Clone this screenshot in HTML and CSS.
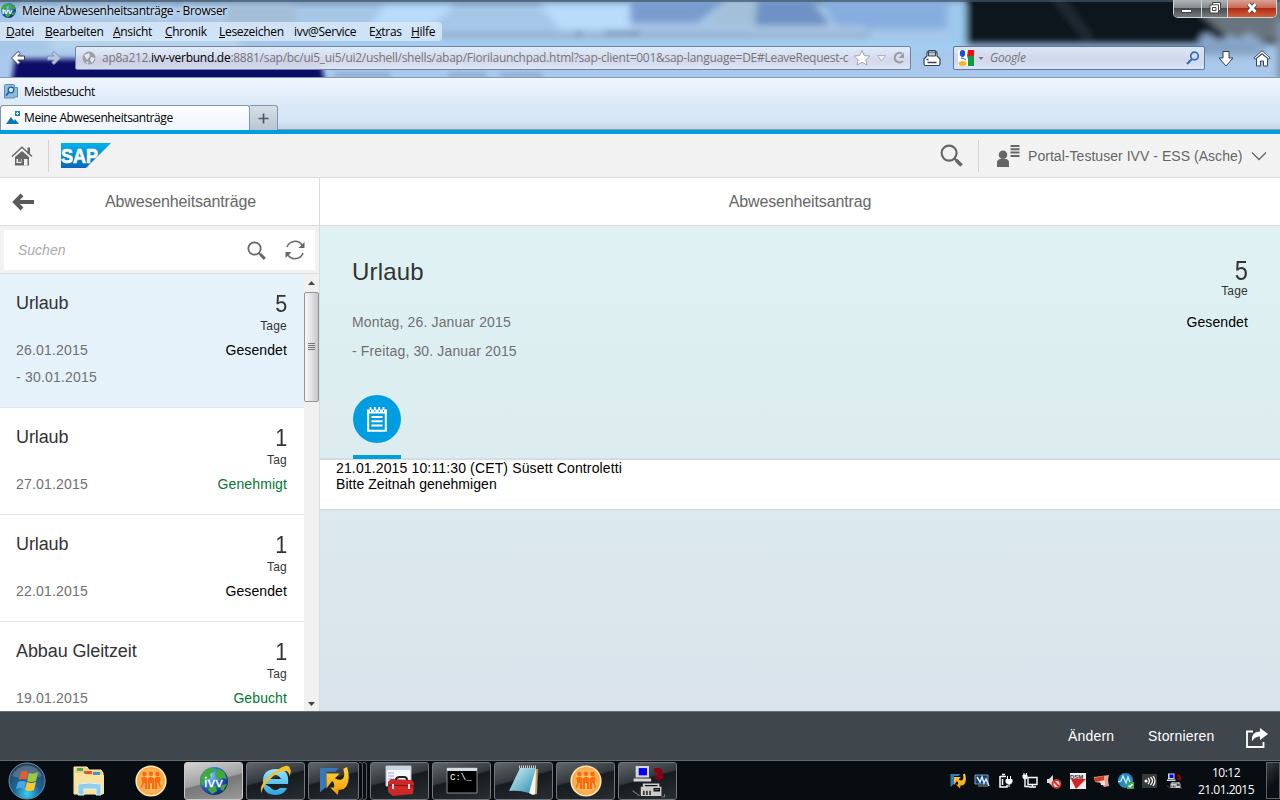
FILE: index.html
```html
<!DOCTYPE html>
<html lang="de">
<head>
<meta charset="utf-8">
<title>Meine Abwesenheitsanträge - Browser</title>
<link rel="stylesheet" href="styles.css">
</head>
<body>
<svg class="defs" width="0" height="0">
  <defs>
    <linearGradient id="sapG" x2="0" y2="1"><stop stop-color="#00b4ec"/><stop offset="1" stop-color="#0a66bb"/></linearGradient>
    <radialGradient id="orb" cx=".5" cy=".85" r=".8"><stop stop-color="#39d0f5"/><stop offset=".45" stop-color="#1c6597"/><stop offset="1" stop-color="#28435c"/></radialGradient>
    <radialGradient id="globe" cx=".35" cy=".3" r=".8"><stop stop-color="#8fd4ff"/><stop offset=".45" stop-color="#2a6fd2"/><stop offset="1" stop-color="#0b1f66"/></radialGradient>
    <radialGradient id="orange"><stop stop-color="#ffd08a"/><stop offset="1" stop-color="#f8a640"/></radialGradient>
    <linearGradient id="ie" x2="0" y2="1"><stop stop-color="#9be4fb"/><stop offset="1" stop-color="#2aa5e0"/></linearGradient>
    <linearGradient id="gold" x2="0" y2="1"><stop stop-color="#ffd93b"/><stop offset="1" stop-color="#f29a05"/></linearGradient>
    <linearGradient id="note" x2="1" y2="1"><stop stop-color="#d6f3fa"/><stop offset="1" stop-color="#2a8fae"/></linearGradient>
    <symbol id="i-globe" viewBox="0 0 32 32">
      <circle cx="16" cy="16" r="14" fill="url(#globe)"/>
      <path d="M4 9Q8 2 15 3l2 3-5 3 1 4-6 3-2 6-3-5zM20 3l6 4 3 7-5-1-4 3-3-6zM12 19l6 2 1 5-5 3-4-4zM24 20l5-1-4 7-3-2z" fill="#41a83c"/>
    </symbol>
    <symbol id="i-people" viewBox="0 0 32 32">
      <circle cx="16" cy="16" r="14.800" fill="url(#orange)" stroke="#ffe6b8" stroke-width="1.600"/>
      <g fill="#fb6a0c"><circle cx="9.500" cy="9" r="2.200"/><circle cx="16" cy="8.800" r="2.200"/><circle cx="22.500" cy="9" r="2.200"/><path d="M6 13q3-2 6.500 0v11H10v-6H9l-2 5-1.500-1q3-4 .5-9zM13 13q3-2 6 0v11h-2v-6h-2v6h-2zM26 13q-3-2-6.500 0v11H22v-6h1l2 5 1.500-1q-3-4-.5-9z"/></g>
    </symbol>
    <symbol id="i-sap-arrow" viewBox="0 0 32 32">
      <path d="M1 2h20l-4 4H8v16l-7 6z" fill="#3a76b8"/>
      <path d="M8 8h14l-5 5q9 5 10-4l-1-6 4-2q4 14-1 21-3 4-8 3l-1 6-8-8h4q1-5-2-7l-6 8z" fill="url(#gold)"/>
    </symbol>
    <symbol id="i-net" viewBox="0 0 32 32">
      <path d="M4 1h13v11H4zM2 13h17v3H2z" fill="#d7d7d7"/><path d="M7 3h8v7H7z" fill="#0000f5"/>
      <path d="M22 3h4q4 0 4 5v3h2l-5 5-6-5h4V8q0-1-3-1z" fill="#8b0010"/>
      <path d="M11 18h16v3h2v9H9v-9h2z" fill="#ccc"/><path d="M12 25v4M15 25v4M18 25v4M22 23h5v2h-5zM13 20h12" fill="none" stroke="#111" stroke-width="1.300"/><path d="M1 25l7 5M29 31h3v-3" fill="none" stroke="#777"/>
    </symbol>
    <symbol id="i-mag" viewBox="0 0 24 24"><circle cx="9.500" cy="9.500" r="7.800" fill="none" stroke="#666" stroke-width="2.200"/><path d="M15 15l3 3" stroke="#666" stroke-width="2.500"/><path d="M17 17l5.500 5.500" stroke="#666" stroke-width="3.800"/></symbol>
  </defs>
</svg>
<div class="screen">
  <header class="chrome">
    <svg class="glass" width="1280" height="78" viewBox="0 0 1280 78">
      <defs><filter id="b" x="-10%" y="-30%" width="120%" height="160%"><feGaussianBlur stdDeviation="3.500"/></filter><filter id="nb" x="-10%" y="-60%" width="120%" height="220%"><feGaussianBlur stdDeviation="2.500"/></filter><linearGradient id="base" x2="0" y2="1"><stop stop-color="#7898b8"/><stop offset=".12" stop-color="#a6c6e6"/><stop offset="1" stop-color="#a8c9ec"/></linearGradient></defs>
      <rect width="1280" height="78" fill="url(#base)"/>
      <g filter="url(#b)">
        <path d="M225 6h70v18h-70z" fill="#a3bdd6"/>
        <path d="M385 6h70l-25 20h-60zM540 5h90v25h-70z" fill="#b9dcfb"/>
        <path d="M630 0h95l-28 23h-67z" fill="#7a9bce"/>
        <path d="M725 0h32v26h-50z" fill="#a4bfda"/>
        <path d="M757 0h55l18 26h-75z" fill="#6f91c5"/>
        <path d="M822 2h125v27H838z" fill="#86addf"/>
        <path d="M948 4h18v45h-18z" fill="#9cc9ed"/>
        <path d="M440 35h430" stroke="#8eabc9" stroke-width="5"/>
        <path d="M750 29h115" stroke="#b4cce6" stroke-width="4"/>
        <path d="M330 46h630" stroke="#a0cff4" stroke-width="8"/>
        <path d="M50 44h190" stroke="#b9d6ec" stroke-width="10"/>
        <path d="M966-15H1300V44H966z" fill="#0b141c"/>
        <path d="M1175-10h120v50h-65z" fill="#69757e"/>
        <path d="M1055-5l35 45" stroke="#202a34" stroke-width="10"/>
        <path d="M1150 48l48-2q4-18 14-10 8 8 18-2 8 10 18-2l18 12v12H1150z" fill="#8ca8ca"/>
        <path d="M1277 20h12v60h-12z" fill="#7e93a6"/>
        <path d="M966 48h290" stroke="#7598bb" stroke-width="4"/>
      </g>
      <path d="M850 61h402" stroke="#2b438f" stroke-width="8" filter="url(#nb)"/>
      <path d="M15 59h305l6 28H11z" fill="#0b1168" filter="url(#nb)"/>
      <g fill="#6d88a8" opacity=".55" filter="url(#nb)"><path d="M335 73h55v4h-55zM448 73h38v4h-38zM500 73h42v4h-42zM575 32h8v4h-8zM605 31h35v4h-35z"/></g>
      <path d="M0 0h1280v2H0z" fill="#40566b" opacity=".7"/>
    </svg>
    <div class="titlebar">
      <svg class="fav" width="17" height="17"><use href="#i-globe" width="17" height="17"/><text x="2" y="12" class="favtxt">ivv</text></svg>
      <span class="title">Meine Abwesenheitsanträge - Browser</span>
      <div class="winbtns">
        <span class="wb"><svg width="12" height="6"><path d="M.5 1.500h10v3h-10z" fill="#fff" stroke="#444"/></svg></span>
        <span class="wb mid"><svg width="12" height="12"><path d="M3.500.5h8v8h-2v2.500h-8.500v-8h2.500z" fill="#fff" stroke="#444"/><path d="M3.500 5.500h3.500v3H3.500zM4 2.800h5.500V8" fill="none" stroke="#444"/></svg></span>
        <span class="wb close"><svg width="14" height="12"><path d="M3.500 2l7 8M10.500 2l-7 8" stroke="#444" stroke-width="4.500"/><path d="M3.500 2l7 8M10.500 2l-7 8" stroke="#fff" stroke-width="2.800"/></svg></span>
      </div>
    </div>
    <nav class="menu">
      <span><u>D</u>atei</span><span><u>B</u>earbeiten</span><span><u>A</u>nsicht</span><span><u>C</u>hronik</span><span><u>L</u>esezeichen</span><span>ivv@Service</span><span>E<u>x</u>tras</span><span><u>H</u>ilfe</span>
    </nav>
    <div class="navbar">
      <svg class="back" width="16" height="16"><path d="M8 1.500L1.500 8 8 14.500l2.200-2L7.800 10h6.700V6H7.800l2.400-2.500z" fill="#fff" stroke="#33405c"/></svg>
      <svg class="fwd" width="16" height="16"><path d="M8 1.500L14.500 8 8 14.500l-2.200-2L8.200 10H1.500V6h6.700L5.800 3.500z" fill="#b9c8de" stroke="#8496b8"/></svg>
      <div class="url">
        <svg width="14" height="14"><circle cx="7" cy="7" r="6.500" fill="#9b9ea5"/><path d="M2 4l5-2 1 3-3 4zM9 6l4 1-3 5-2-3zM4 10l3 2-2 1z" fill="#e3e5ed"/></svg>
        <span class="addr">ap8a212.<b>ivv-verbund.de</b>:8881/sap/bc/ui5_ui5/ui2/ushell/shells/abap/Fiorilaunchpad.html?sap-client=001&amp;sap-language=DE#LeaveRequest-c</span>
        <svg class="urlicons" width="54" height="18"><path d="M8 1.500l2.300 5 5.500.5-4 3.700 1.200 5.300L8 13.300 3 16l1.200-5.300L0 7l5.600-.5z" fill="#fff" stroke="#a0a4ac"/><path d="M23.500 6.500h8L27.500 12z" fill="#eef0f6" stroke="#adb1bb"/><path d="M48 4.500A4.800 4.800 0 1 0 49 12" fill="none" stroke="#999da6" stroke-width="2.200"/><path d="M44.500 9H50V3.500z" fill="#999da6"/></svg>
      </div>
      <svg class="print" width="18" height="18"><path d="M4 7V3.500l2-2h6l2 2V7l3 3v5q0 1.500-1.500 1.500h-13Q1 16.500 1 15v-5z" fill="#fff" stroke="#34425a" stroke-width="1.200"/><path d="M5.500 3h7v4h-7z" fill="#b9c6d8" stroke="#34425a"/><path d="M4.500 13.500h9M3.500 10.500h2" stroke="#34425a" stroke-width="1.500"/></svg>
      <div class="gsearch">
        <svg width="27" height="16"><path d="M0 0h16v16H0z" fill="#fff"/><path d="M9 0h7v6H9z" fill="#f20d12"/><path d="M9 6h7v10H9z" fill="#129946"/><path d="M7 0h3L9 6l1 3v7H8z" fill="#fff"/><ellipse cx="4.500" cy="3.500" rx="2.700" ry="3.400" fill="#1c52cf"/><path d="M3 8q3 0 5 2" stroke="#1c52cf" fill="none"/><ellipse cx="4.500" cy="13.500" rx="4" ry="2.500" fill="#f7b51c"/><path d="M20.500 7h5L23 10z" fill="#777"/></svg>
        <i>Google</i>
        <svg class="gmag" width="14" height="14"><circle cx="8.500" cy="5" r="3.800" fill="none" stroke="#3470ae" stroke-width="1.700"/><path d="M6 8l-5 5" stroke="#3470ae" stroke-width="2.200"/></svg>
      </div>
      <svg class="dl" width="16" height="17"><path d="M5 1.500h6v6.500h4L8 16 1 8h4z" fill="#fff" stroke="#34425a"/></svg>
      <svg class="hm" width="18" height="17"><path d="M3.500 8.500v7.500h4v-5h3v5h4V8.500L9 4z" fill="#fff" stroke="#34425a"/><path d="M9 .8L.8 8l1.200 1.200L9 3.500l7 5.700L17.200 8 14.500 5.500z" fill="#fff" stroke="#34425a" stroke-width=".9"/></svg>
    </div>
  </header>
  <div class="tools">
    <div class="bookmarks"><svg width="15" height="16"><path d="M.5 1.500q0-1 1-1h8q1 0 1 1v2h3v9.500h-3v1H.5z" fill="#8dbbe0" stroke="#5b8dba"/><circle cx="7" cy="6" r="2.800" fill="#d6eafa" stroke="#255f93" stroke-width="1.300"/><path d="M5 8L2 11.500" stroke="#255f93" stroke-width="1.800"/></svg><span>Meistbesucht</span></div>
    <div class="tabs">
      <div class="tab"><svg width="14" height="14"><path d="M0 0h14v14H0z" fill="#fff"/><path d="M0 13l5-7 3 4 1-2 4 5z" fill="#0a77b5"/><path d="M9 0h5v5H9z" fill="#1184c6"/><path d="M11.500 1v3M10 2.500h3" stroke="#fff"/></svg><span>Meine Abwesenheitsanträge</span></div>
      <div class="plus"><svg width="11" height="11"><path d="M5.500.5v10M.5 5.500h10" stroke="#4b5967" stroke-width="1.700"/></svg></div>
    </div>
  </div>
  <div class="shell">
    <svg class="home" width="22" height="20"><path d="M4 11L11 5l7 6v8.500H4z" fill="#666"/><path d="M1 10.500L11 1.200l10 9.300" fill="none" stroke="#666" stroke-width="1.400"/><path d="M16.500 1.500H19V8h-2.500z" fill="#666"/><path d="M5.500 13h5v4h-5zM13 13h3.500v6.500H13z" fill="#f2f2f2"/><path d="M7 13h3v3H7z" fill="#777"/></svg>
    <span class="sep"></span>
    <svg class="logo" width="51" height="26"><path d="M0 0h50L25 25H0z" fill="url(#sapG)"/><text x="0" y="20" class="saptxt" textLength="37" lengthAdjust="spacingAndGlyphs">SAP</text></svg>
    <span class="grow"></span>
    <svg class="smag" width="23" height="23"><use href="#i-mag"/></svg>
    <span class="sep"></span>
    <svg class="user" width="24" height="23"><circle cx="7" cy="10.800" r="4.300" fill="#666"/><path d="M1 23v-4.500q0-3 3-3.500h6q3 .5 3 3.500v4.500z" fill="#666"/><path d="M14.500 2h9M14.500 5.300h9M14.500 8.600h9M14.500 11.900h9" stroke="#666" stroke-width="2"/></svg>
    <span class="uname">Portal-Testuser IVV - ESS (Asche)</span>
    <svg class="chev" width="16" height="10"><path d="M1 1.500l7 7 7-7" fill="none" stroke="#666" stroke-width="1.300"/></svg>
  </div>
  <main class="main">
    <aside class="master">
      <div class="phead"><svg class="arrow" width="23" height="18"><path d="M10 1.800L3 9l7 7M3 9h19" fill="none" stroke="#5a5a5a" stroke-width="4"/></svg><span>Abwesenheitsanträge</span></div>
      <div class="searchwrap"><div class="searchbox"><i>Suchen</i><svg class="m1" width="19" height="19"><use href="#i-mag"/></svg><svg class="m2" width="20" height="20"><path d="M2 7A8.500 8.500 0 0 1 17 5M18 13A8.500 8.500 0 0 1 3 15" fill="none" stroke="#666" stroke-width="1.500"/><path d="M19.500 2v6h-6zM.5 18v-6h6z" fill="#666"/></svg></div></div>
      <div class="listarea">
        <div class="list">
          <article class="item sel"><div class="r1"><h3>Urlaub</h3><span class="num">5</span></div><div class="unit">Tage</div><div class="r2"><span>26.01.2015<br>- 30.01.2015</span><b>Gesendet</b></div></article>
          <article class="item"><div class="r1"><h3>Urlaub</h3><span class="num">1</span></div><div class="unit">Tag</div><div class="r2"><span>27.01.2015</span><b class="ok">Genehmigt</b></div></article>
          <article class="item"><div class="r1"><h3>Urlaub</h3><span class="num">1</span></div><div class="unit">Tag</div><div class="r2"><span>22.01.2015</span><b>Gesendet</b></div></article>
          <article class="item"><div class="r1"><h3>Abbau Gleitzeit</h3><span class="num">1</span></div><div class="unit">Tag</div><div class="r2"><span>19.01.2015</span><b class="ok">Gebucht</b></div></article>
        </div>
        <div class="scroll">
          <svg class="up" width="7" height="4"><path d="M0 4h7L3.500 0z" fill="#444"/></svg>
          <div class="thumb"><svg width="7" height="9"><path d="M0 .5h7M0 2.500h7M0 4.500h7M0 6.500h7" stroke="#777"/></svg></div>
          <span class="grow"></span>
          <svg class="down" width="7" height="4"><path d="M0 0h7L3.500 4z" fill="#444"/></svg>
        </div>
      </div>
    </aside>
    <section class="detail">
      <div class="phead center"><span>Abwesenheitsantrag</span></div>
      <div class="hero">
        <div class="hrow"><h2>Urlaub</h2><span class="num big">5</span></div>
        <div class="hunit">Tage</div>
        <div class="hdates"><span>Montag, 26. Januar 2015<br>- Freitag, 30. Januar 2015</span><b>Gesendet</b></div>
        <div class="icontab"><span class="disc"><svg width="20" height="25"><path d="M1.200 4h17.600v19.800H1.200z" fill="none" stroke="#fff" stroke-width="2"/><path d="M0 2.500h20v4H0z" fill="#fff"/><path d="M3.500 0v3M7.800 0v3M12.200 0v3M16.500 0v3" stroke="#fff" stroke-width="1.800"/><path d="M3.500 3v2M7.800 3v2M12.200 3v2M16.500 3v2" stroke="#009de0" stroke-width="1"/><path d="M4.500 10h11M4.500 14.300h11M4.500 18.600h11" stroke="#fff" stroke-width="2"/></svg></span></div>
      </div>
      <div class="notes"><span class="stamp">21.01.2015 10:11:30 (CET) Süsett Controletti</span><br>Bitte Zeitnah genehmigen</div>
    </section>
  </main>
  <footer class="actions"><span class="a1">Ändern</span><span class="a2">Stornieren</span><svg width="22" height="20"><path d="M7 3.500H1v15.500h16.500V14" fill="none" stroke="#fff" stroke-width="1.800"/><path d="M14 0l8 6-8 6V8.500q-5.500 0-8 5Q4.500 4 14 3.500z" fill="#fff"/></svg></footer>
  <div class="taskbar">
    <div class="start"><svg width="38" height="38" viewBox="0 0 38 38"><circle cx="19" cy="19" r="18" fill="url(#orb)" stroke="#6d8ca6"/><path d="M4 14A16 16 0 0 1 34 14Q19 19 4 14z" fill="#fff" opacity=".2"/><path d="M13 10q3-2 7 0l-2 8q-4-2-7 0z" fill="#ee5b2a"/><path d="M21 11q4 2 9-1l-2 9q-5 2-9 0z" fill="#a0c93b"/><path d="M10 20q4-2 8 0l-2 7q-4-2-8 0z" fill="#4aa7e8"/><path d="M19 20q4 2 9 0l-2 8q-5 2-9 0z" fill="#fdc72e"/></svg></div>
    <div class="pin"><svg width="34" height="32"><path d="M2 2h13l2 3h12l2 3v21H2z" fill="#edd37f" stroke="#fff0b5"/><path d="M5 3h6v3H5z" fill="#51a757"/><path d="M12 6h8v3h-8z" fill="#d9583e"/><path d="M21 7h7v3h-7z" fill="#4794c4"/><path d="M3 8h9l2 2h18v19H3z" fill="#f7e39d"/><path d="M6 30V19q11-2 23 0v11h-5v-6H12v6z" fill="#90cee9" stroke="#d7f2fc"/></svg></div>
    <div class="pin"><svg width="32" height="32"><use href="#i-people"/></svg></div>
    <div class="task active"><svg width="32" height="32"><use href="#i-globe"/><text x="6" y="22" class="ivvtxt">ivv</text></svg></div>
    <div class="task"><svg width="34" height="32"><path d="M6 19h23q2-15-12-15T4 18q0 12 13 12 8 0 11-7h-7q-6 5-10-1zM11 14q6-8 11 0z" fill="url(#ie)" fill-rule="evenodd"/><path d="M3 29Q-2 20 14 8T31 4q2 2-1 8 1-5-3-6-8-1-17 9T3 29z" fill="#f7bf26"/></svg></div>
    <div class="task narrow"><svg width="32" height="30"><use href="#i-sap-arrow"/></svg></div><div class="stack"></div><div class="stack s2"></div>
    <div class="task t6"><svg width="32" height="32"><path d="M2 1h25v20H2z" fill="#f6f9fc" stroke="#aebbc8"/><path d="M2 1h25v4H2z" fill="#c9d6e2"/><path d="M4 8h6M4 11h6M4 14h6M4 17h6" stroke="#94a8bb"/><path d="M4 17l3-3 21 1 2 3-1 11-20 2-5-4z" fill="#cc2828"/><path d="M4 20l26 1" stroke="#7c1212"/><path d="M12 15q0-3 4-3h4q3 0 3 3" fill="none" stroke="#222" stroke-width="2"/><path d="M9 19v5M25 19v5" stroke="#ddd" stroke-width="2"/></svg></div>
    <div class="task"><svg width="32" height="28"><path d="M1 1h30v25H1z" fill="#000" stroke="#8c8c8c"/><path d="M1 1h30v3H1z" fill="#d7dce0"/><text x="4" y="13" class="cmd">C:\_</text></svg></div>
    <div class="task"><svg width="32" height="32"><path d="M18 4h12l-1 25-5 1z" fill="#c9a45b"/><path d="M12 3h16l-7 25q-10-3-20-2z" fill="url(#note)"/><path d="M28 3l-1 26q-2 2-6-1z" fill="#f4fafc"/><path d="M11 2h17" stroke="#ccc" stroke-width="3" stroke-dasharray="1 1"/></svg></div>
    <div class="task"><svg width="32" height="32"><use href="#i-people"/></svg></div>
    <div class="task"><svg width="34" height="33"><use href="#i-net" width="34" height="33"/></svg></div>
    <span class="grow"></span>
    <div class="tray">
      <svg width="16" height="16"><use href="#i-sap-arrow"/></svg>
      <svg width="16" height="16"><path d="M1 2h13v9H1zM4 13h10" fill="#193e69" stroke="#819bb6"/><path d="M3 4l3 5 2-5 2 6 2-4 3 7" fill="none" stroke="#d7eaff" stroke-width="1.500"/></svg>
      <svg width="16" height="16"><path d="M2 3.500h6M2 3v11h7v-2M4 1.500h3M4.500 6v6" fill="none" stroke="#fff" stroke-width="1.500"/><path d="M8 6.500h6v3q-3 3.500-6 0zM9.500 6V3M12.500 6V3M11 12v2" fill="#fff" stroke="#fff"/></svg>
      <svg width="16" height="16"><path d="M6 4.500h9v7H6zM7 14h7M10.500 12v2M3 6v7.500H7" fill="none" stroke="#fff" stroke-width="1.400"/><path d="M1 2h4v3q-2 2-4 0zM2 0v3M4.500 0v3" fill="#fff" stroke="#fff"/></svg>
      <svg width="16" height="16"><path d="M1 6h2l4-4v12L3 10H1z" fill="#ddd"/><circle cx="10.500" cy="11" r="4" fill="#f7dcd8" stroke="#d82e2e" stroke-width="1.800"/><path d="M8 8.500l5 5" stroke="#d82e2e" stroke-width="1.800"/></svg>
      <svg width="16" height="16"><path d="M0 0h16v16H0z" fill="#eee"/><text x="0" y="5.500" class="dsm">DSM</text><path d="M1 6h15l-10 10z" fill="#d91f26"/></svg>
      <svg width="16" height="16"><path d="M0 4l15-2-1 5 1 6-5 1-3-4-6-1z" fill="#e6a393"/><path d="M0 5l10-2v4l-9 2z" fill="#c6402d"/><path d="M6 8h5v4H7z" fill="#f5dcd5"/></svg>
      <svg width="16" height="16"><circle cx="7.500" cy="7.500" r="7.500" fill="#278ac0"/><path d="M0 9l3-1 2-5 3 7 2-6 2 5" fill="none" stroke="#cfefff" stroke-width="1.300"/><path d="M9 9h7v7H9z" fill="#35a94c"/><path d="M10.500 12.500l1.500 1.500 2.500-3" stroke="#fff" fill="none" stroke-width="1.500"/></svg>
      <svg width="16" height="16"><path d="M0 1h15v14H0z" fill="#393939"/><circle cx="4" cy="8" r="1.500" fill="#fff"/><path d="M6 5q3 3 0 6M8.500 4q4 4 0 8M11 3q4 5 0 10" stroke="#fff" fill="none" stroke-width="1.200"/></svg>
      <svg width="16" height="16"><use href="#i-net"/></svg>
    </div>
    <div class="clock">10:12<br>21.01.2015</div>
    <div class="peek"></div>
  </div>
</div>
</body>
</html>
```

FILE: styles.css
```css
* { box-sizing: border-box; }
body { margin: 0; width: 1280px; height: 800px; overflow: hidden; font-family: "Liberation Sans", Arial, sans-serif; }
svg { display: block; flex: none; }
b { font-weight: normal; color: #000; }
.defs { position: absolute; }
.grow { flex: 1; }
.screen { display: flex; flex-direction: column; width: 1280px; height: 800px; }

/* Browser window frame */
.chrome { position: relative; isolation: isolate; height: 78px; flex: none; border-bottom: 1px solid #8499b3; font: 12px/16px "Open Sans", "Noto Sans", sans-serif; letter-spacing: -.35px; overflow: hidden; white-space: nowrap; }
.glass { position: absolute; left: 0; top: 0; z-index: -1; }
.titlebar { display: flex; height: 22px; align-items: flex-start; }
.fav { margin-top: 2px; }
.favtxt { font: bold 8px "Liberation Sans", sans-serif; fill: #fff; }
.title { margin: 3px 0 0 5px; flex: 1; letter-spacing: -.3px; text-shadow: 0 0 8px #fff, 0 0 5px #dcebfa; }
.winbtns { display: flex; width: 104px; height: 18px; margin-right: 3px; border: 1px solid #d1d4d6; border-top: 0; border-radius: 0 0 5px 5px; overflow: hidden; }
.wb { width: 28px; display: flex; align-items: center; justify-content: center; padding-bottom: 2px; background: linear-gradient(#b0b4b7, #83888b 48%, #474c50 50%, #777c80); border-right: 1px solid #d1d4d6; }
.wb:first-child { padding: 4px 0 0; }
.wb.mid { width: 27px; }
.wb.close { width: 48px; border: 0; background: linear-gradient(#d9a296, #c56753 48%, #b22c12 50%, #d0603f); }
.menu { display: grid; grid-template-columns: 39px 68px 52px 54px 75px 75px 42px 31px; width: 442px; height: 19px; padding-left: 6px; line-height: 19px; letter-spacing: -.3px; background: rgba(225,237,249,.72); border-radius: 0 4px 4px 0; }
.navbar { display: flex; align-items: center; height: 34px; }
.back { margin-left: 10px; }
.fwd { margin-left: 20px; }
.url { display: flex; align-items: center; height: 24px; width: 836px; margin-left: 13px; padding-left: 6px; border: 1px solid #7083a0; border-radius: 2px; background: linear-gradient(rgba(236,244,253,.8), rgba(214,217,235,.94) 60%, rgba(225,232,246,.94)); }
.addr { margin-left: 6px; color: #777; width: 752px; letter-spacing: -.275px; }
.print { margin-left: 12px; }
.gsearch { display: flex; align-items: center; height: 24px; width: 252px; margin-left: 12px; padding-left: 4px; border: 1px solid #6177a0; border-radius: 2px; background: linear-gradient(#dbe7f4, #d0d6eb 60%, #dae6f8); color: #777; }
.gsearch i { flex: 1; margin-left: 5px; letter-spacing: -.2px; }
.gmag { margin-right: 4px; }
.dl { margin-left: 13px; }
.hm { margin-left: 19px; }
.tools { height: 52px; flex: none; background: linear-gradient(#f0f6fe, #dae8f7 55%, #d5e5f5 85%, #c4d5e5); font: 12px/16px "Open Sans", "Noto Sans", sans-serif; letter-spacing: -.35px; border-bottom: 1px solid #8b9cab; }
.bookmarks { display: flex; height: 27px; align-items: center; padding-left: 4px; gap: 5px; }
.tabs { display: flex; height: 25px; }
.tab { display: flex; align-items: center; gap: 4px; width: 250px; padding-left: 5px; letter-spacing: -.4px; background: linear-gradient(#fff, #edf4fb); border: 1px solid #8794a2; border-bottom: 0; border-radius: 3px 3px 0 0; }
.plus { display: flex; align-items: center; justify-content: center; width: 28px; background: linear-gradient(#d6dfe8, #b9c5d0); border: 1px solid #8794a2; border-left: 0; border-bottom: 0; border-radius: 0 3px 0 0; }

/* Launchpad shell */
.shell { display: flex; align-items: center; height: 48px; flex: none; border-top: 4px solid #009de0; border-bottom: 1px solid #dcdcdc; background: #f2f2f2; color: #666; font-size: 14px; }
.home { margin-left: 11px; margin-right: 15px; }
.sep { width: 1px; height: 32px; background: #d3d3d3; }
.logo { margin-left: 12px; }
.saptxt { font: bold 20px "Liberation Sans", sans-serif; fill: #fff; stroke: #fff; stroke-width: .7px; }
.smag { margin-right: 15px; }
.user { margin: 0 8px 0 17px; }
.uname { width: 215px; letter-spacing: .04px; white-space: nowrap; }
.chev { margin: 0 13px 0 8px; }
.main { display: flex; height: 533px; flex: none; }
.master { width: 320px; border-right: 1px solid #dcdcdc; display: flex; flex-direction: column; background: #f2f2f2; }
.phead { display: flex; align-items: center; height: 48px; flex: none; padding-top: 1px; background: #fff; border-bottom: 1px solid #dcdcdc; color: #666; font-size: 16px; letter-spacing: -.15px; }
.arrow { margin: 0 70px 0 12px; }
.phead.center { justify-content: center; }
.searchwrap { height: 48px; flex: none; padding: 4px; border-bottom: 1px solid #dcdcdc; }
.searchbox { display: flex; align-items: center; height: 40px; width: 311px; background: #fff; padding-left: 14px; color: #aaa; font-size: 14px; }
.searchbox i { width: 229px; }
.m1 { margin-right: 19px; }
.m1 use, .smag use { width: 100%; height: 100%; }
.listarea { display: flex; flex: 1; min-height: 0; overflow: hidden; }
.list { width: 304px; overflow: hidden; background: #fff; }
.item { height: 107px; padding: 16px 17px 0 16px; border-bottom: 1px solid #e5e5e5; font-size: 14px; }
.item.sel { height: 134px; background: #e6f2fa; }
.r1 { display: flex; justify-content: space-between; height: 28px; }
h3 { margin: 3px 0 0; font-size: 18px; line-height: 20px; font-weight: normal; color: #333; letter-spacing: -.1px; }
.num { font-size: 24px; line-height: 28px; color: #333; transform: scaleX(.9); transform-origin: right; }
.unit { height: 16px; font-size: 12px; line-height: 16px; text-align: right; color: #333; letter-spacing: .2px; }
.r2 { display: flex; justify-content: space-between; margin-top: 3px; line-height: 27px; color: #707070; letter-spacing: .2px; }
.r2 b { letter-spacing: .1px; }
.r2 .ok { color: #007833; }
.scroll { width: 15px; display: flex; flex-direction: column; align-items: center; background: #f0f0f0; }
.up { margin-top: 7px; }
.thumb { display: flex; align-items: center; justify-content: center; width: 15px; height: 110px; margin-top: 7px; border: 1px solid #959595; border-radius: 2px; background: linear-gradient(90deg, #f6f6f6, #e1e1e4 50%, #c5c6cc); }
.down { margin-bottom: 5px; }
.detail { flex: 1; background: linear-gradient(#ddf1f3, #dae3eb); display: flex; flex-direction: column; }
.hero { height: 234px; padding: 29px 32px 0; border-bottom: 2px solid #d0dfe2; font-size: 14px; background: linear-gradient(#dff1f3, #dcecef); }
.hrow { display: flex; justify-content: space-between; height: 28px; }
h2 { margin: 3px 0 0; font-size: 24px; line-height: 28px; font-weight: normal; color: #333; letter-spacing: .2px; }
.big { font-size: 27px; line-height: 32px; transform: scaleX(.88); }
.hunit { font-size: 12px; line-height: 16px; text-align: right; color: #333; letter-spacing: .2px; }
.hdates { display: flex; justify-content: space-between; line-height: 29px; margin-top: 9px; color: #707070; letter-spacing: .14px; }
.hdates b { letter-spacing: .1px; }
.icontab { width: 48px; height: 64px; margin: 29px 0 0 1px; border-bottom: 4px solid #009de0; }
.disc { display: flex; align-items: center; justify-content: center; width: 48px; height: 48px; border-radius: 50%; background: #009de0; }
.notes { height: 50px; background: #fff; border-bottom: 1px solid #d4dce1; padding-left: 16px; font-size: 14px; line-height: 16px; letter-spacing: .05px; }
.stamp { letter-spacing: .14px; }
.actions { display: flex; align-items: center; height: 49px; flex: none; background: #3f464c; border-top: 1px solid #63717a; color: #fff; font-size: 14px; letter-spacing: .2px; }
.a1 { margin-left: 1068px; width: 80px; }
.a2 { width: 98px; }
.actions svg { margin-top: 3px; }

/* Windows taskbar */
.taskbar { display: flex; height: 40px; flex: none; padding: 1px 0; background: #080d12; border-top: 1px solid #5f686e; }
.start { width: 54px; padding-left: 8px; }
.pin { width: 62px; padding-top: 3px; display: flex; justify-content: center; align-items: flex-start; padding-left: 8px; }
.pin + .pin { width: 68px; padding-left: 2px; }
.task { width: 59px; height: 38px; margin-right: 3px; border: 1px solid #71777c; border-radius: 3px; background: linear-gradient(165deg, #60666b, #34393d 42%, #161b20 46%, #292e33); display: flex; align-items: center; justify-content: center; }
.task.active { border-color: #c7c7c7; background: linear-gradient(165deg, #d3d3d3, #a2a2a2 48%, #777 52%, #999); }
.task.narrow { width: 51px; margin-right: 0; }
.stack { width: 4px; height: 38px; border: 1px solid #555d63; border-left: 0; border-radius: 0 3px 3px 0; }
.s2 { margin-right: 3px; }
.ivvtxt { font: 13px "DejaVu Sans", sans-serif; fill: #fff; stroke: #fff; stroke-width: .3px; }
.cmd { font: 9px "Liberation Mono", monospace; fill: #fff; }
.dsm { font: bold 6px "Liberation Sans", sans-serif; fill: #333; }
.tray { display: flex; align-items: center; gap: 8px; margin-right: 14px; }
.clock { width: 60px; font: 12px/17px "Open Sans", sans-serif; color: #fff; text-align: center; letter-spacing: -.5px; padding-top: 2px; }
.peek { width: 14px; margin-left: 10px; border: 1px solid #5c6267; background: linear-gradient(135deg, #343a3f, #0c1015 60%); }
```
